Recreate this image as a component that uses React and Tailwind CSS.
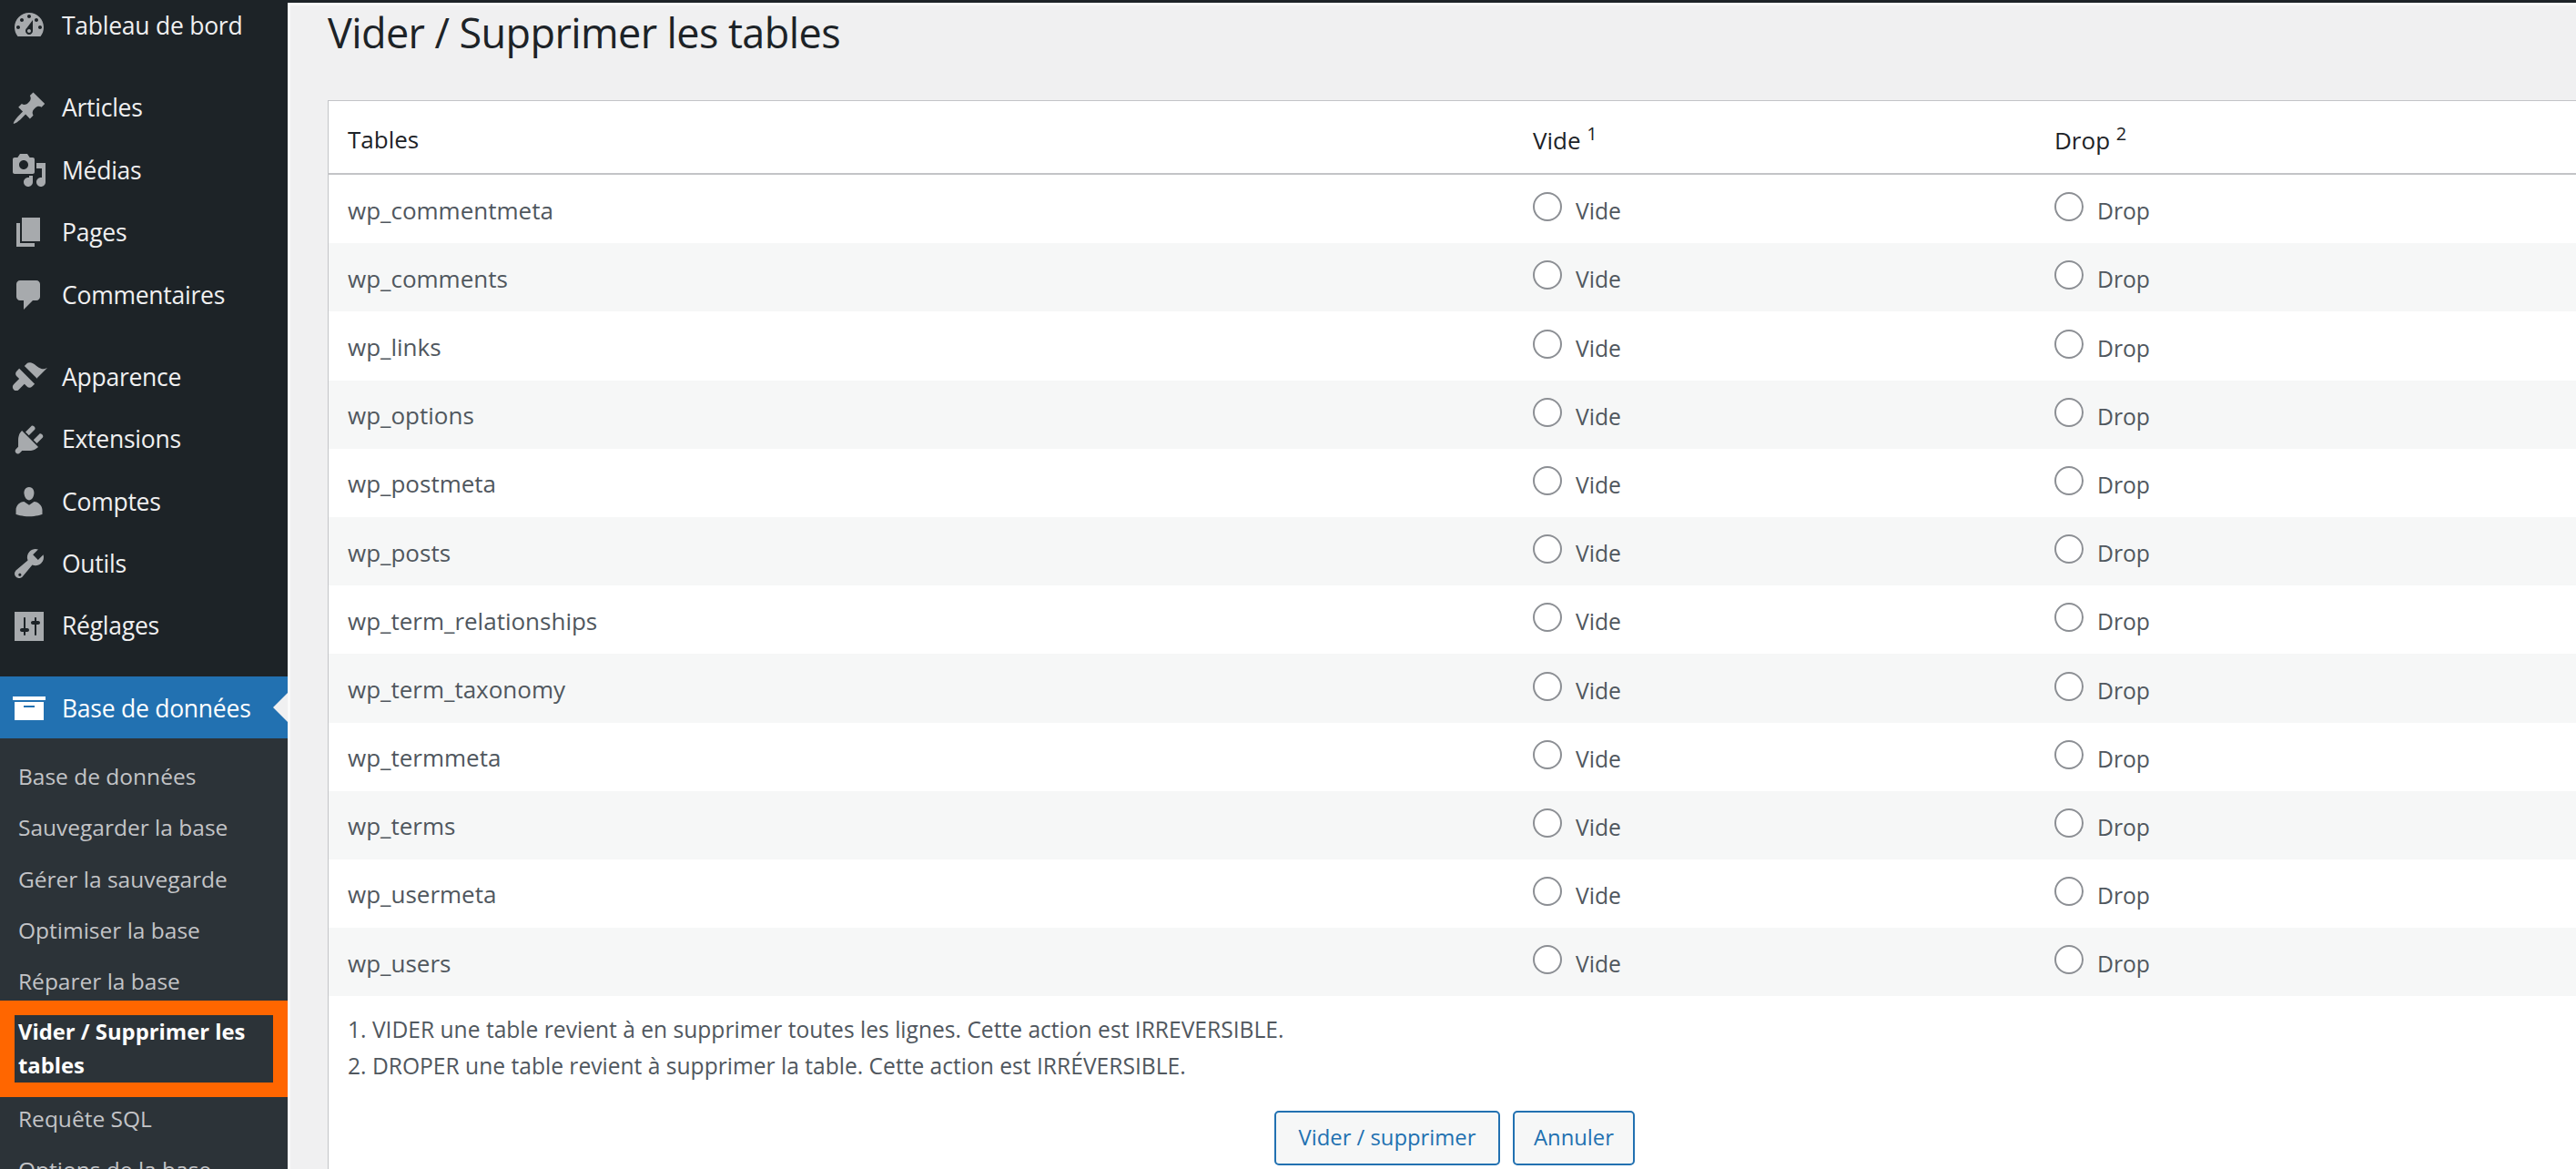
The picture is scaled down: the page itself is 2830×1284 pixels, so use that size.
const FONT = "font-['Open_Sans','Noto_Sans',sans-serif]";

const I = {
  dash: "M3.76 16h12.48c1.1-1.37 1.76-3.11 1.76-5 0-4.42-3.58-8-8-8s-8 3.58-8 8c0 1.89.66 3.63 1.76 5zM10 4c.55 0 1 .45 1 1s-.45 1-1 1-1-.45-1-1 .45-1 1-1zM6 6c.55 0 1 .45 1 1s-.45 1-1 1-1-.45-1-1 .45-1 1-1zm8 0c.55 0 1 .45 1 1s-.45 1-1 1-1-.45-1-1 .45-1 1-1zm-5.37 5.55L12 7v6c0 1.1-.9 2-2 2s-2-.9-2-2c0-.57.24-1.08.63-1.45zM4 10c.55 0 1 .45 1 1s-.45 1-1 1-1-.45-1-1 .45-1 1-1zm12 0c.55 0 1 .45 1 1s-.45 1-1 1-1-.45-1-1 .45-1 1-1zm-5 3c0-.55-.45-1-1-1s-1 .45-1 1 .45 1 1 1 1-.45 1-1z",
  pin: "M10.44 3.02l1.82-1.82 6.36 6.35-1.83 1.82c-1.05-.68-2.48-.57-3.41.36l-.75.75c-.92.93-1.04 2.35-.35 3.41l-1.83 1.82-2.41-2.41-2.8 2.79c-.42.42-3.38 2.71-3.8 2.29s1.86-3.39 2.28-3.81l2.79-2.79L4.1 9.36l1.83-1.82c1.05.69 2.48.57 3.4-.36l.75-.75c.93-.92 1.05-2.35.36-3.41z",
  media: "M13 11V4c0-.55-.45-1-1-1h-1.67L9 1H5L3.67 3H2c-.55 0-1 .45-1 1v7c0 .55.45 1 1 1h10c.55 0 1-.45 1-1zM7 4.5c1.38 0 2.5 1.12 2.5 2.5S8.38 9.5 7 9.5 4.5 8.38 4.5 7 5.62 4.5 7 4.5zM14 6h5v10.5c0 1.38-1.12 2.5-2.5 2.5S14 17.88 14 16.5s1.12-2.5 2.5-2.5c.17 0 .34.02.5.05V9h-3V6zm-4 8.05V13h2v3.5c0 1.38-1.12 2.5-2.5 2.5S7 17.88 7 16.5 8.12 14 9.5 14c.17 0 .34.02.5.05z",
  page: "M6 15V2h10v13H6zm-1 1h8v2H3V5h2v11z",
  comment: "M5 2h9c1.1 0 2 .9 2 2v7c0 1.1-.9 2-2 2h-2l-5 5v-5H5c-1.1 0-2-.9-2-2V4c0-1.1.9-2 2-2z",
  brush: "M14.48 11.06L7.41 3.99l1.5-1.5c.5-.56 2.3-.47 3.51.32 1.21.8 1.43 1.28 2.91 2.1 1.18.64 2.45 1.26 4.67.12l-6.02 6.03zm-5.66-1.41l4.24 4.24-1.42 1.42c-.78.78-2.05.78-2.83 0l-1.41-1.42-2.12 2.12-.94.94c-.78.78-2.05.78-2.83 0-.78-.78-.78-2.05 0-2.83l.94-.94 2.12-2.12-1.42-1.41c-.78-.78-.78-2.05 0-2.83l1.42-1.41 4.25 4.24z",
  plug: "M13.11 4.36L9.87 7.6 8 5.73l3.24-3.24c.35-.34 1.05-.2 1.56.32.52.51.66 1.21.31 1.55zm-8 1.77l.91-1.12 9.01 9.01-1.19.84c-.71.71-2.63 1.16-3.82 1.16H6.14L4.9 17.26c-.59.59-1.54.59-2.12 0-.59-.58-.59-1.53 0-2.12l1.24-1.24v-3.88c0-1.13.4-3.05 1.09-3.89zm7.26 3.97l3.24-3.24c.34-.35 1.04-.21 1.55.31.52.51.66 1.21.31 1.55l-3.24 3.25z",
  user: "M10 9.25c-2.27 0-2.73-3.44-2.73-3.44C7 4.02 7.82 2 9.97 2c2.16 0 2.98 2.02 2.71 3.81 0 0-.41 3.44-2.68 3.44zm0 2.57L12.72 10c2.39 0 4.52 2.33 4.52 4.53v2.49s-3.65 1.13-7.24 1.13c-3.65 0-7.24-1.13-7.24-1.13v-2.49c0-2.25 1.94-4.48 4.47-4.48z",
  tool: "M16.68 9.77c-1.34 1.34-3.3 1.67-4.95.99l-5.41 6.52c-.99.99-2.59.99-3.57 0-.99-.98-.99-2.58 0-3.57l6.52-5.42c-.68-1.65-.35-3.61.99-4.95 1.28-1.28 3.12-1.62 4.72-1.06l-2.89 2.89 2.82 2.82 2.86-2.87c.53 1.58.18 3.4-1.09 4.65zM4.36 15.6c-.31.31-.31.81 0 1.12.31.31.81.31 1.12 0 .31-.31.31-.81 0-1.12-.31-.31-.81-.31-1.12 0z",
  settings: "M18 18V2H2v16h16zM8 11h1c.55 0 1 .45 1 1s-.45 1-1 1H8v1.5c0 .28-.22.5-.5.5s-.5-.22-.5-.5V13H6c-.55 0-1-.45-1-1s.45-1 1-1h1V5.5c0-.28.22-.5.5-.5s.5.22.5.5V11zm5-2h-1c-.55 0-1-.45-1-1s.45-1 1-1h1V5.5c0-.28.22-.5.5-.5s.5.22.5.5V7h1c.55 0 1 .45 1 1s-.45 1-1 1h-1v5.5c0 .28-.22.5-.5.5s-.5-.22-.5-.5V9z",
  archive: "M19 4v2H1V4h18zM2 7h16v10H2V7zm11 3V9H7v1h6z",
};

function Icon({ d, className }) {
  return (
    <svg viewBox="0 0 20 20" className={className} fill="currentColor" aria-hidden="true">
      <path d={d} fillRule="evenodd" />
    </svg>
  );
}

function MenuItem({ icon, label }) {
  return (
    <li className="flex h-[68.4px] items-center">
      <Icon d={icon} className="ml-[12px] mr-[16px] h-[40px] w-[40px] shrink-0 text-[#a7aaad]" />
      <span className="text-[26.5px] leading-none tracking-[-0.25px] text-[#f0f0f1]">{label}</span>
    </li>
  );
}

function SubItem({ label }) {
  return (
    <li className="flex h-[56.4px] items-center pl-[20px] text-[24.5px] leading-none text-[#c3c4c7]">
      {label}
    </li>
  );
}

const TABLES = [
  "wp_commentmeta", "wp_comments", "wp_links", "wp_options", "wp_postmeta", "wp_posts",
  "wp_term_relationships", "wp_term_taxonomy", "wp_termmeta", "wp_terms", "wp_usermeta", "wp_users",
];

function Radio({ label }) {
  return (
    <label className="flex items-start">
      <span className="mt-[-3px] h-[32px] w-[32px] shrink-0 rounded-full border-2 border-[#8c8f94] bg-white" />
      <span className="ml-[15px] mt-[6px] text-[24.7px] leading-none text-[#50575e]">{label}</span>
    </label>
  );
}

export default function App() {
  return (
    <div className={`${FONT} flex h-[1284px] w-full overflow-hidden bg-[#f0f0f1]`}>
      <aside className="h-full w-[316px] shrink-0 overflow-hidden bg-[#1d2327]">
        <ul className="-mt-[6px]">
          <MenuItem icon={I.dash} label="Tableau de bord" />
        </ul>
        <ul className="mt-[22px]">
          <MenuItem icon={I.pin} label="Articles" />
          <MenuItem icon={I.media} label="Médias" />
          <MenuItem icon={I.page} label="Pages" />
          <MenuItem icon={I.comment} label="Commentaires" />
        </ul>
        <ul className="mt-[22px]">
          <MenuItem icon={I.brush} label="Apparence" />
          <MenuItem icon={I.plug} label="Extensions" />
          <MenuItem icon={I.user} label="Comptes" />
          <MenuItem icon={I.tool} label="Outils" />
          <MenuItem icon={I.settings} label="Réglages" />
        </ul>
        <div className="relative mt-[21px] flex h-[68px] items-center bg-[#2271b1] text-white">
          <Icon d={I.archive} className="ml-[12px] mr-[16px] h-[40px] w-[40px] shrink-0" />
          <span className="mt-[2px] text-[26.5px] leading-none tracking-[-0.25px]">Base de données</span>
          <span className="absolute right-0 top-1/2 h-0 w-0 -translate-y-1/2 border-y-[16px] border-r-[16px] border-y-transparent border-r-[#f0f0f1]" />
        </div>
        <ul className="bg-[#2c3338] pt-[14px]">
          <SubItem label="Base de données" />
          <SubItem label="Sauvegarder la base" />
          <SubItem label="Gérer la sauvegarde" />
          <SubItem label="Optimiser la base" />
          <SubItem label="Réparer la base" />
          <li className="relative -mt-[8px] border-[16px] border-[#ff6600] bg-[#2c3338] pl-[4px] text-[23.8px] font-bold leading-[37px] text-white">
            Vider / Supprimer les tables
          </li>
          <li className="-mt-[4px]">
            <ul>
              <SubItem label="Requête SQL" />
              <SubItem label="Options de la base" />
            </ul>
          </li>
        </ul>
      </aside>

      <main className="min-w-0 flex-1 border-t-[3px] border-t-[#1d2327]">
        <div className="w-[2520px] border-l-[3px] border-t-[3px] border-l-[#fafafa] border-t-[#f8f8f8] pl-[41px]">
          <h1 className="h-[104px] pt-[4px] text-[45px] font-normal leading-[52px] tracking-[-0.6px] text-[#1d2327]">
            Vider / Supprimer les tables
          </h1>
          <section className="border border-[#c3c4c7] bg-white text-[24.6px] text-[#50575e]">
            <div className="grid h-[81px] grid-cols-[1302px_573px_1fr] items-center border-b-2 border-b-[#c3c4c7] pl-[21px] text-[26px] text-[#1d2327]">
              <span className="mt-[5px]">Tables</span>
              <span className="mt-[7px]">Vide <sup className="text-[20px]">1</sup></span>
              <span className="mt-[7px]">Drop <sup className="text-[20px]">2</sup></span>
            </div>
            {TABLES.map((name, i) => (
              <div
                key={name}
                className={`grid h-[75.2px] grid-cols-[1302px_573px_1fr] items-center pl-[21px] ${i % 2 === 1 ? "bg-[#f6f7f7]" : "bg-white"}`}
              >
                <span className="mt-[3px] text-[26px]">{name}</span>
                <Radio label="Vide" />
                <Radio label="Drop" />
              </div>
            ))}
            <div className="pl-[21px] pt-[17px] leading-[40px]">
              <p>1. VIDER une table revient à en supprimer toutes les lignes. Cette action est IRREVERSIBLE.</p>
              <p>2. DROPER une table revient à supprimer la table. Cette action est IRRÉVERSIBLE.</p>
            </div>
            <div className="flex justify-center gap-[14px] pb-[40px] pt-[29px]">
              <button className="h-[60px] w-[248px] rounded-[5px] border-2 border-[#2271b1] bg-[#f6f7f7] text-[23.8px] text-[#2271b1]">Vider / supprimer</button>
              <button className="h-[60px] w-[134px] rounded-[5px] border-2 border-[#2271b1] bg-[#f6f7f7] text-[23.8px] text-[#2271b1]">Annuler</button>
            </div>
          </section>
        </div>
      </main>
    </div>
  );
}
